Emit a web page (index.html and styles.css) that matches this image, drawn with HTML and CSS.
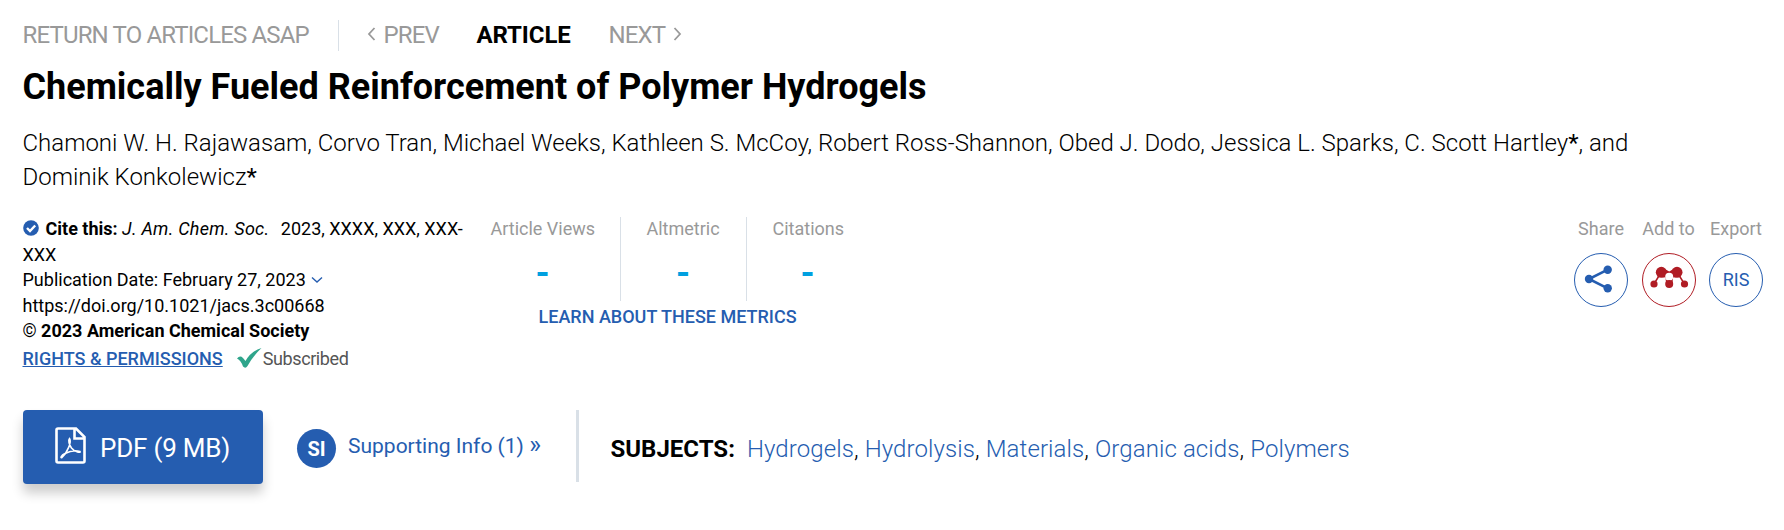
FILE: index.html
```
<!DOCTYPE html>
<html lang="en">

<head>
    <meta charset="UTF-8">
    <meta name="viewport" content="width=device-width, initial-scale=1.0">
    <title>Chemically Fueled Reinforcement of Polymer Hydrogels</title>
    <link rel="stylesheet" href="styles.css">
</head>

<body>
    <div class="article-header">
        <nav class="article-nav">
            <a class="nav-return">RETURN TO ARTICLES ASAP</a>
            <a class="nav-prev"><svg class="nav-arrow" width="9" height="14" viewBox="0 0 9 14"><path d="M7.500 1L2 7l5.500 6"/></svg>PREV</a>
            <span class="nav-current">ARTICLE</span>
            <a class="nav-next">NEXT<svg class="nav-arrow" width="9" height="14" viewBox="0 0 9 14"><path d="M1.500 1L7 7l-5.500 6"/></svg></a>
        </nav>

        <h1>Chemically Fueled Reinforcement of Polymer Hydrogels</h1>

        <div class="authors">Chamoni W. H. Rajawasam, Corvo Tran, Michael Weeks, Kathleen S. McCoy, Robert Ross-Shannon, Obed J. Dodo, Jessica L. Sparks, C. Scott Hartley<b>*</b>, and<br>Dominik Konkolewicz<b>*</b></div>

        <div class="info-row">
            <div class="cite">
                <div><svg class="cite-icon" width="16" height="16" viewBox="0 0 16 16"><circle cx="8" cy="8" r="7.800"/><path d="M4 8l3 3 5.200-5.500"/></svg><b>Cite this:</b> <i>J. Am. Chem. Soc.</i> <span class="cite-year">2023, XXXX, XXX, XXX-</span><br>XXX</div>
                <div>Publication Date: February 27, 2023<svg class="date-arrow" width="12" height="8" viewBox="0 0 12 8"><path d="M1 1.500L6 6l5-4.500"/></svg></div>
                <div class="doi">https://doi.org/10.1021/jacs.3c00668</div>
                <div class="copyright">© <b>2023 American Chemical Society</b></div>
                <div class="rights-row">
                    <a class="rights">RIGHTS &amp; PERMISSIONS</a>
                    <svg class="check" width="25" height="20" viewBox="0 0 25 20"><path d="M0 10.500Q3 7 6 10L8.500 13Q14 3 24.500 0 16 8 10.500 18 8.500 21 6 18.500Q4 12.500 0 10.500z"/></svg>
                    <span class="subscribed">Subscribed</span>
                </div>
            </div>

            <div class="metrics">
                <div class="metric-list">
                    <div class="metric views">Article Views<span class="metric-value">-</span></div>
                    <div class="metric altmetric">Altmetric<span class="metric-value">-</span></div>
                    <div class="metric citations">Citations<span class="metric-value">-</span></div>
                </div>
                <a class="learn">LEARN ABOUT THESE METRICS</a>
            </div>

            <div class="tools">
                <div class="tool share">
                    <span>Share</span>
                    <a class="tool-icon">
                        <svg width="52" height="52" viewBox="1 1 52 52"><path class="share-line" d="M33.700 16.700L15 26l18.700 9.300"/><circle cx="33.700" cy="16.700" r="4.200"/><circle cx="15" cy="26" r="4.200"/><circle cx="33.700" cy="35.300" r="4.200"/></svg>
                    </a>
                </div>
                <div class="tool add">
                    <span>Add to</span>
                    <a class="tool-icon mendeley">
                        <svg width="52" height="52" viewBox="1 1 52 52"><path class="link-line" d="M17.500 22L12 31M36.800 22L42.500 31"/><path d="M19.500 14L27.200 18.500 35 14V24L31 24.500 30.500 30H24L23.500 24.500 19.500 24z"/><circle cx="19.300" cy="19.300" r="5.500"/><circle cx="35" cy="19.300" r="5.500"/><circle class="hole" cx="27.200" cy="23.700" r="4"/><circle cx="12" cy="31" r="3.600"/><circle cx="27.200" cy="31" r="4"/><circle cx="42.500" cy="31" r="3.600"/></svg>
                    </a>
                </div>
                <div class="tool export">
                    <span>Export</span>
                    <a class="tool-icon">RIS</a>
                </div>
            </div>
        </div>

        <div class="bottom-row">
            <a class="pdf-btn">
                <svg width="31" height="37" viewBox="0 0 31 37"><path class="page" d="M1.500 3Q1.500 1.500 3 1.500H21L29.500 10V34Q29.500 35.500 28 35.500H3Q1.500 35.500 1.500 34zM19.500 2v9.500h9.500"/><path class="acrobat" d="M14.500 11.500C17 15 12 26 7 30.500C5 31.500 6 28.500 10 26.500C14 24.500 20 23 25 24.500C26 26 20 25.500 16.500 21C14 17.500 13 13 14.500 11.500z"/></svg>
                <span>PDF (9 MB)</span>
            </a>
            <a class="supporting"><span class="si-badge">SI</span><span class="si-text">Supporting Info (1) <span class="raquo">»</span></span></a>
            <div class="subjects"><b>SUBJECTS:</b><span class="subject-list"><a>Hydrogels</a>, <a>Hydrolysis</a>, <a>Materials</a>, <a>Organic acids</a>, <a>Polymers</a></span></div>
        </div>
    </div>
</body>

</html>
```
FILE: styles.css
```
body {
    font-family: Roboto, Arial, sans-serif;
    margin: 0;
    background-color: #fff;
    color: #000;
}

svg {
    flex: none;
}

b {
    font-weight: 700;
}

.article-header {
    box-sizing: border-box;
    min-height: 530px;
    padding: 20px 21px 0 22.5px;
}

.article-nav {
    display: flex;
    align-items: center;
    height: 31px;
    font-size: 24px;
    line-height: 31px;
    letter-spacing: -0.85px;
    color: #999;
    white-space: nowrap;
}

.nav-return {
    width: 315px;
    border-right: 1px solid #d9e0e7;
}

.nav-prev {
    width: 109px;
    padding-left: 28px;
}

.nav-arrow {
    fill: none;
    stroke: #999;
    stroke-width: 1.8;
    vertical-align: 2px;
}

.nav-prev .nav-arrow {
    margin-right: 8px;
}

.nav-next .nav-arrow {
    margin-left: 8px;
}

.nav-current {
    width: 132px;
    padding-left: 1px;
    font-weight: 700;
    color: #000;
    letter-spacing: -0.1px;
}

h1 {
    margin: 15px 0 0;
    font-size: 36px;
    line-height: 42px;
    font-weight: 700;
}

.authors {
    margin-top: 18px;
    font-size: 24px;
    line-height: 34px;
    font-weight: 300;
    white-space: nowrap;
}

.authors b {
    font-weight: 400;
}

.info-row {
    display: flex;
    align-items: flex-start;
    height: 194px;
    margin-top: 22px;
    font-size: 18px;
    line-height: 25.5px;
}

.cite {
    width: 468px;
    white-space: nowrap;
}

.cite i {
    letter-spacing: 0.25px;
}

.cite-icon {
    margin-right: 7px;
    fill: #255db0;
    vertical-align: -1px;
}

.cite-icon path {
    fill: none;
    stroke: #fff;
    stroke-width: 2.4;
}

.cite-year {
    margin-left: 7px;
}

.date-arrow {
    margin-left: 5px;
    fill: none;
    stroke: #255db0;
    stroke-width: 1.4;
    vertical-align: 2px;
}

.rights-row {
    display: flex;
    align-items: center;
    margin-top: 2px;
}

.rights {
    color: #255db0;
    font-weight: 500;
    text-decoration: underline;
}

.check {
    margin: 0 1px 0 14px;
    fill: #2fa58b;
}

.subscribed {
    color: #555;
    letter-spacing: -0.4px;
}

.metrics {
    width: 354px;
    color: #999;
}

.metric-list {
    display: flex;
    height: 84px;
    margin-top: 1px;
}

.metric {
    display: flex;
    flex-direction: column;
    box-sizing: border-box;
    border-right: 1px solid #d9e0e7;
    line-height: 24px;
}

.views {
    width: 130px;
}

.altmetric {
    width: 126px;
    padding-left: 26px;
}

.citations {
    padding-left: 26px;
    border: none;
}

.metric-value {
    width: 104px;
    margin-top: 14px;
    font-size: 36px;
    line-height: 36px;
    font-weight: 700;
    text-align: center;
    color: #00a0e0;
}

.altmetric .metric-value {
    width: 73px;
}

.citations .metric-value {
    width: 70px;
}

.learn {
    display: block;
    margin-left: 48px;
    line-height: 32px;
    font-weight: 500;
    color: #255db0;
    white-space: nowrap;
}

.tools {
    display: flex;
    gap: 13.5px;
    margin-left: auto;
    color: #999;
}

.tool {
    display: flex;
    flex-direction: column;
    align-items: center;
    width: 54px;
    white-space: nowrap;
}

.tool-icon {
    display: flex;
    align-items: center;
    justify-content: center;
    box-sizing: border-box;
    width: 54px;
    height: 54px;
    margin-top: 11px;
    border: 1px solid #255db0;
    border-radius: 50%;
    color: #255db0;
    fill: #255db0;
}

.share-line {
    fill: none;
    stroke: #255db0;
    stroke-width: 2.6;
}

.mendeley {
    border-color: #b01c24;
    fill: #b01c24;
}

.link-line {
    stroke: #b01c24;
    stroke-width: 1.5;
}

.hole {
    fill: #fff;
}

.bottom-row {
    display: flex;
    align-items: flex-start;
    height: 74px;
    white-space: nowrap;
}

.pdf-btn {
    display: flex;
    align-items: center;
    box-sizing: border-box;
    width: 240px;
    height: 74px;
    padding-left: 32px;
    border-radius: 4px;
    background-color: #255db0;
    box-shadow: 0 9px 12px rgba(0, 0, 0, 0.2);
    font-size: 26px;
    letter-spacing: -0.2px;
    color: #fff;
}

.pdf-btn svg {
    margin-bottom: 4px;
}

.pdf-btn span {
    margin: 2px 0 0 14.5px;
}

.page {
    fill: none;
    stroke: #fff;
    stroke-width: 2.6;
}

.acrobat {
    fill: none;
    stroke: #fff;
    stroke-width: 1.6;
}

.supporting {
    display: flex;
    align-items: center;
    box-sizing: border-box;
    width: 313px;
    height: 76px;
    padding-left: 34.5px;
    color: #255db0;
    font-size: 21px;
}

.si-badge {
    width: 39px;
    height: 39px;
    margin-right: 12px;
    border-radius: 50%;
    background-color: #255db0;
    font-weight: 700;
    font-size: 20px;
    line-height: 40px;
    text-align: center;
    color: #fff;
}

.si-text {
    margin-top: -4px;
}

.raquo {
    font-size: 25px;
    line-height: 20px;
}

.subjects {
    height: 72px;
    padding-left: 32px;
    border-left: 3px solid #d9e0e7;
    font-size: 24px;
    line-height: 78px;
    font-weight: 300;
}

.subject-list {
    margin-left: 12px;
    letter-spacing: 0.1px;
}

.subjects a {
    color: #255db0;
}
```
